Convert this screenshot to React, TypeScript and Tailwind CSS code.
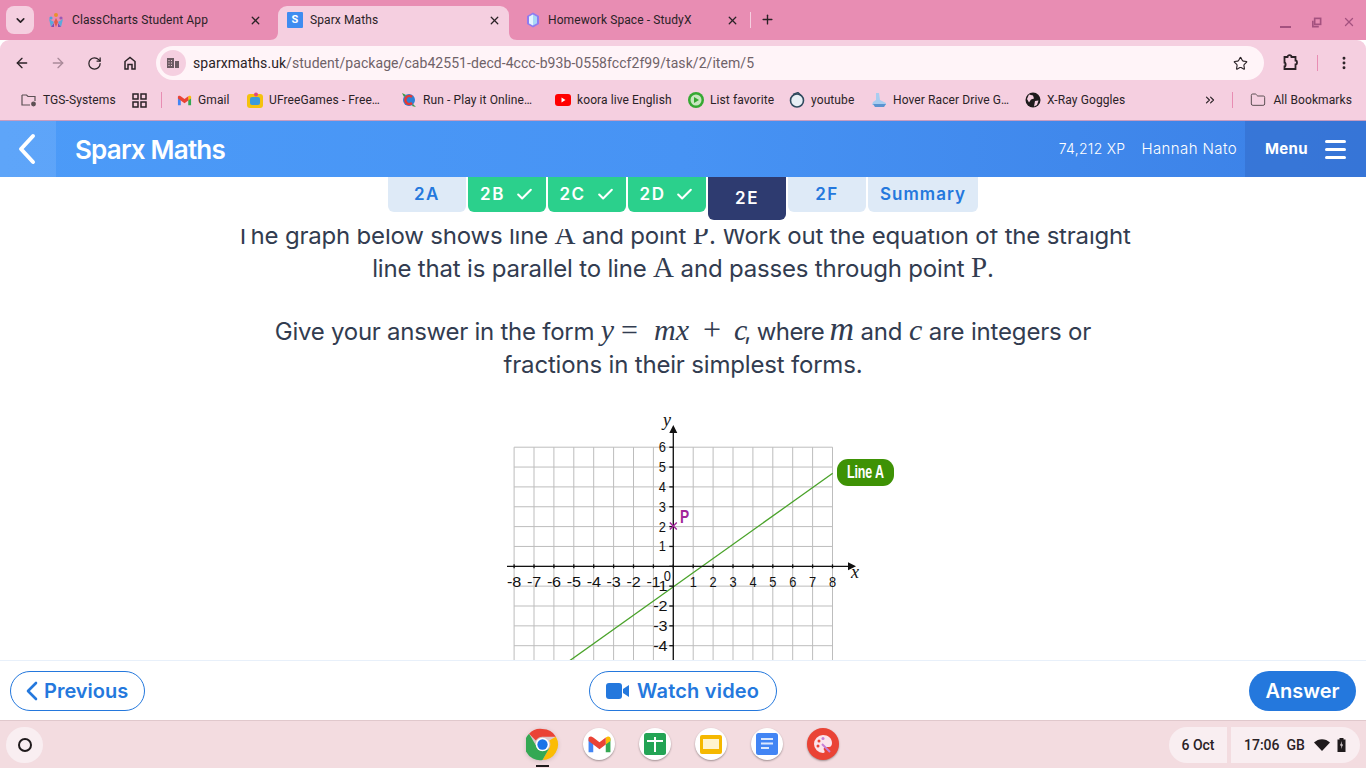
import { ArrowLeft, ArrowRight, RotateCw, Star, Plus, X, ChevronDown, ChevronsRight, Folder, EllipsisVertical, Check } from "lucide-react";

const roboto = { fontFamily: "Roboto, sans-serif" };

function ClassChartsIcon() {
  return (
    <svg width="16" height="16" viewBox="0 0 16 16">
      <circle cx="8" cy="3" r="2" fill="#e8912d" />
      <circle cx="3" cy="6" r="1.600" fill="#4aa3df" />
      <circle cx="13" cy="6" r="1.600" fill="#9b59b6" />
      <path d="M1 7l5 3-3 5zM15 7l-5 3 3 5z" fill="#5aa9dc" />
      <path d="M8 6l2 4-2 5-2-5z" fill="#e25a4a" />
      <path d="M6 11l-3 4h3zM10 11l3 4h-3z" fill="#7d4fb3" />
    </svg>
  );
}

function SparxIcon() {
  return (
    <div className="w-4 h-4 rounded-[1px] bg-[#3f8cf0] text-white text-[11px] font-bold flex items-center justify-center" style={roboto}>
      S
    </div>
  );
}

function GemIcon() {
  return (
    <svg width="16" height="16" viewBox="0 0 16 16">
      <path d="M8 .5l6 3.500v8l-6 3.500-6-3.500V4z" fill="#8f7cf0" />
      <path d="M8 2.500l4 2.300v6.400l-4 2.300-4-2.300V4.800z" fill="#a9d8f7" />
      <path d="M8 2.500v11l-4-2.300V4.800z" fill="#e3f4ff" />
    </svg>
  );
}

function GmailIcon({ size = 16 }: { size?: number }) {
  return (
    <svg width={size} height={size} viewBox="0 0 16 16">
      <path d="M1 4v9h3V7z" fill="#4285f4" />
      <path d="M15 4v9h-3V7z" fill="#34a853" />
      <path d="M12 3.500V8l3-2.200V4c0-1-1.300-1.500-2-1z" fill="#fbbc04" />
      <path d="M1 5.800L4 8l4 3 4-3V3.500L8 6.500 4 3.500 3 3c-.7-.5-2 0-2 1z" fill="#ea4335" />
    </svg>
  );
}

function Tab({ icon, title, active, gap }: { icon: React.ReactNode; title: string; active?: boolean; gap: string }) {
  return (
    <div className={`w-[231px] h-[34px] mt-[6px] pb-[6px] flex items-center pl-[9px] pr-[8px] relative ${active ? "bg-[#f5cfe0] rounded-t-[9px]" : ""}`}>
      {active && (
        <>
          <svg width="8" height="8" viewBox="0 0 8 8" className="absolute -left-2 bottom-0">
            <path d="M8 0v8H0c5 0 8-3 8-8z" fill="#f5cfe0" />
          </svg>
          <svg width="8" height="8" viewBox="0 0 8 8" className="absolute -right-2 bottom-0">
            <path d="M0 0v8h8C3 8 0 5 0 0z" fill="#f5cfe0" />
          </svg>
        </>
      )}
      <div className="w-4 flex justify-center shrink-0">{icon}</div>
      <span className={`${gap} text-xs tracking-[0.1px] text-[#2a2226] flex-1 whitespace-nowrap overflow-hidden`}>{title}</span>
      <X size={13} strokeWidth={2.4} className="text-[#2a2226]" />
    </div>
  );
}

function Bookmark({ icon, label, width }: { icon: React.ReactNode; label: string; width: string }) {
  return (
    <div className={`${width} flex items-center gap-[6px] shrink-0`}>
      <div className="w-4 h-4 flex items-center justify-center shrink-0">{icon}</div>
      <span className="text-xs tracking-[0.1px] text-[#2a2226] whitespace-nowrap">{label}</span>
    </div>
  );
}

function TopBar() {
  return (
    <div style={roboto}>
      {/* tab strip */}
      <div className="h-10 bg-[#e88db3] flex items-start pl-[6px]">
        <div className="w-7 h-7 mt-[6px] mr-[5px] rounded-lg bg-[#f5cfe0] flex items-center justify-center shrink-0">
          <ChevronDown size={13} strokeWidth={3} className="text-[#2a2226]" />
        </div>
        <div className="mr-[8px]">
          <Tab icon={<ClassChartsIcon />} title="ClassCharts Student App" gap="ml-[8px]" />
        </div>
        <div className="mr-[7px]">
          <Tab icon={<SparxIcon />} title="Sparx Maths" active gap="ml-[7px]" />
        </div>
        <Tab icon={<GemIcon />} title="Homework Space - StudyX" gap="ml-[7px]" />
        <div className="w-px h-4 bg-[#f5cfe0] mt-[12px] ml-[3px] shrink-0" />
        <Plus size={15} strokeWidth={2.2} className="mt-[12px] ml-[9px] text-[#2a2226] shrink-0" />
        <div className="flex-1" />
        <div className="flex items-center h-[34px] pr-[10px] pt-[10px] gap-[20px] text-[#a4517f]">
          <div className="w-[11px] h-[2px] bg-current mt-[10px]" />
          <svg width="11" height="11" viewBox="0 0 12 12" fill="none" stroke="currentColor" strokeWidth="1.800">
            <rect x="4" y="1.500" width="6.500" height="6.500" />
            <path d="M2 4v6.500h6.500" />
          </svg>
          <X size={14} strokeWidth={2.2} />
        </div>
      </div>
      {/* toolbar */}
      <div className="h-[46px] bg-[#f5cfe0] rounded-t-[9px] flex items-center pl-[14px] pr-[14px] relative">
        <ArrowLeft size={16} strokeWidth={2} className="text-[#2a2226]" />
        <ArrowRight size={16} strokeWidth={2} className="text-[#a98a99] ml-[20px]" />
        <RotateCw size={15} strokeWidth={2} className="text-[#2a2226] ml-[21px]" />
        <svg width="16" height="16" viewBox="0 0 16 16" fill="none" stroke="#2a2226" strokeWidth="1.500" className="ml-[20px]">
          <path d="M3 14V6.500L8 2.500l5 4V14h-3V9.500H6V14z" />
        </svg>
        <div className="ml-[18px] h-[34px] flex-1 bg-[#fff4f8] rounded-full flex items-center pl-[4px] pr-[16px]">
          <div className="w-[26px] h-[26px] rounded-full bg-[#f5cfe0] flex items-center justify-center">
            <svg width="14" height="14" viewBox="0 0 14 14" fill="#6b5a62">
              <path d="M1 2h7v10H1zM9 5h4v7H9z" />
              <path d="M2.500 4h1v1h-1zM5 4h1v1H5zM2.500 6.500h1v1h-1zM5 6.500h1v1H5zM2.500 9h1v1h-1zM5 9h1v1H5z" fill="#f5cfe0" />
            </svg>
          </div>
          <span className="ml-[7px] text-sm tracking-[0.06px] text-[#2a2226]">sparxmaths.uk</span>
          <span className="text-sm tracking-[0.06px] text-[#6f6268]">/student/package/cab42551-decd-4ccc-b93b-0558fccf2f99/task/2/item/5</span>
          <div className="flex-1" />
          <Star size={15} strokeWidth={1.8} className="text-[#2a2226]" />
        </div>
        <svg width="18" height="18" viewBox="0 0 18 18" fill="none" stroke="#2a2226" strokeWidth="1.800" className="ml-[17px]">
          <path d="M3.500 3h3c0-2.500 4-2.500 4 0h4v3.500c2 0 2 4 0 4V15h-11v-2.500c1.500 0 1.500-4 0-4z" />
        </svg>
        <div className="w-px h-4 bg-[#e88db3] ml-[18px]" />
        <EllipsisVertical size={16} strokeWidth={2.4} className="text-[#2a2226] ml-[18px]" />
      </div>
      {/* bookmarks */}
      <div className="h-[34px] pb-[6px] bg-[#f5cfe0] flex items-center pl-[21px] pr-[14px]">
        <Bookmark
          width="w-[111px]"
          label="TGS-Systems"
          icon={
            <svg width="16" height="14" viewBox="0 0 16 14" fill="none" stroke="#5c5054" strokeWidth="1.200">
              <path d="M1 2h4.500l1.500 1.500h7V8M9 12H1V2" />
              <circle cx="12.500" cy="11" r="1.800" fill="#5c5054" />
            </svg>
          }
        />
        <svg width="15" height="15" viewBox="0 0 15 15" fill="none" stroke="#2a2226" strokeWidth="1.500">
          <rect x="1" y="1" width="5" height="5" />
          <rect x="9" y="1" width="5" height="5" />
          <rect x="1" y="9" width="5" height="5" />
          <rect x="9" y="9" width="5" height="5" />
        </svg>
        <div className="w-px h-4 bg-[#e88db3] ml-[14px] mr-[14px]" />
        <Bookmark width="w-[71px]" label="Gmail" icon={<GmailIcon size={15} />} />
        <Bookmark
          width="w-[154px]"
          label="UFreeGames - Free…"
          icon={
            <svg width="16" height="16" viewBox="0 0 16 16">
              <rect x="0" y="2" width="16" height="14" rx="3" fill="#f4c20d" />
              <rect x="3" y="5" width="10" height="8" rx="2" fill="#3a9bdc" />
              <circle cx="9" cy="2.500" r="2" fill="#e2487f" />
            </svg>
          }
        />
        <Bookmark
          width="w-[154px]"
          label="Run - Play it Online…"
          icon={
            <svg width="16" height="16" viewBox="0 0 16 16">
              <circle cx="8" cy="8" r="6" fill="#2f7fd6" />
              <path d="M1 1l4 2-2 2zM12 12l3 3-4-1z" fill="#3c9a46" />
              <path d="M11 5a4 4 0 1 0 0 6" fill="none" stroke="#e53935" strokeWidth="2.500" />
            </svg>
          }
        />
        <Bookmark
          width="w-[133px]"
          label="koora live English"
          icon={
            <svg width="16" height="12" viewBox="0 0 16 12">
              <rect width="16" height="12" rx="3" fill="#ff0000" />
              <path d="M6.500 3.500v5l4-2.500z" fill="#fff" />
            </svg>
          }
        />
        <Bookmark
          width="w-[101px]"
          label="List favorite"
          icon={
            <svg width="16" height="16" viewBox="0 0 16 16">
              <circle cx="8" cy="8" r="8" fill="#35a832" />
              <circle cx="8" cy="8" r="5.500" fill="#c8e6c0" />
              <path d="M6 5v6l5-3z" fill="#35a832" />
            </svg>
          }
        />
        <Bookmark
          width="w-[82px]"
          label="youtube"
          icon={
            <svg width="16" height="16" viewBox="0 0 16 16">
              <circle cx="8" cy="8.500" r="6.500" fill="#e8eff5" stroke="#2f4a5e" strokeWidth="1.600" />
              <path d="M4 2.500l5-2 3 3" fill="none" stroke="#2f4a5e" strokeWidth="1.400" />
            </svg>
          }
        />
        <Bookmark
          width="w-[154px]"
          label="Hover Racer Drive G…"
          icon={
            <svg width="16" height="16" viewBox="0 0 16 16">
              <path d="M5 1h3l1 7 6 3v2H1l1-3 3-2z" fill="#a9cdf0" />
              <path d="M2 12h13l-2 3H4z" fill="#5b93d0" />
            </svg>
          }
        />
        <Bookmark
          width="w-[100px]"
          label="X-Ray Goggles"
          icon={
            <svg width="16" height="16" viewBox="0 0 16 16">
              <circle cx="8" cy="8" r="7.500" fill="#1e1b1c" />
              <path d="M4 2.500l4 1 1 3-3 1-2 3L2 7zM10 9l3.500-.5L12 13l-3 1.500z" fill="#f5cfe0" />
            </svg>
          }
        />
        <div className="flex-1" />
        <ChevronsRight size={14} strokeWidth={2} className="text-[#2a2226]" />
        <div className="w-px h-4 bg-[#e88db3] ml-[15px] mr-[17px]" />
        <Folder size={16} strokeWidth={1.500} className="text-[#5c5054]" />
        <span className="text-xs tracking-[0.1px] text-[#2a2226] ml-[7px] whitespace-nowrap">All Bookmarks</span>
      </div>
    </div>
  );
}

function Header() {
  return (
    <div className="h-[57px] flex items-stretch bg-gradient-to-r from-[#4c9bf8] via-[#4793f4] to-[#3b80e6] text-white border-t border-[#c79cc0]" style={{ fontFamily: "Inter, sans-serif" }}>
      <div className="w-14 bg-white/10 flex items-center justify-center">
        <svg width="18" height="32" viewBox="0 0 18 32" fill="none" stroke="#fff" strokeWidth="4" strokeLinecap="round" strokeLinejoin="round" className="-ml-[3px]">
          <path d="M15 3L3 16l12 13" />
        </svg>
      </div>
      <span className="ml-[19px] self-center text-[26px] font-semibold tracking-[-0.8px]">Sparx Maths</span>
      <div className="flex-1" />
      <span className="self-center text-sm tracking-[0.3px] font-light">74,212 XP</span>
      <span className="self-center text-[15px] tracking-[0.4px] font-light ml-4 mr-2">Hannah Nato</span>
      <div className="w-[121px] bg-[#3470d0]/70 flex items-center pl-5 gap-[17px]">
        <span className="text-[15px] tracking-[0.3px] font-bold">Menu</span>
        <div className="flex flex-col gap-[5px]">
          <div className="w-[21px] h-[3px] rounded-full bg-white" />
          <div className="w-[21px] h-[3px] rounded-full bg-white" />
          <div className="w-[21px] h-[3px] rounded-full bg-white" />
        </div>
      </div>
    </div>
  );
}

function TaskTab({ label, kind }: { label: string; kind: "todo" | "done" | "current" }) {
  const cls =
    kind === "done"
      ? "bg-[#2bd08c] text-white h-[35px]"
      : kind === "current"
        ? "bg-[#2e3b70] text-white h-[43px]"
        : "bg-[#deeaf7] text-[#2478dd] h-[35px]";
  const summary = label === "Summary";
  return (
    <div className={`${summary ? "w-[110px] tracking-[1px]" : "w-[78px] tracking-[1.5px]"} ${cls} rounded-b-md flex items-center justify-center gap-[10px] text-[17px] font-semibold`}>
      <span>{label}</span>
      {kind === "done" && <Check size={19} strokeWidth={2.6} />}
    </div>
  );
}

function Graph() {
  const ox = 159.3;
  const oy = 156.3;
  const ux = 19.9;
  const uy = 19.85;
  const xs = Array.from({ length: 17 }, (_, i) => i - 8);
  const ys = Array.from({ length: 12 }, (_, i) => 6 - i);
  const labelFont = { fontFamily: "'Liberation Sans', sans-serif" };
  return (
    <svg width="420" height="260" viewBox="0 0 420 260" className="block ml-[514px] overflow-visible">
      <g stroke="#bdbdbd" strokeWidth="1">
        {xs.map((v) => (
          <line key={v} x1={ox + v * ux} x2={ox + v * ux} y1={oy - 6 * uy} y2={260} />
        ))}
        {ys.map((v) => (
          <line key={v} x1={ox - 8 * ux} x2={ox + 8 * ux} y1={oy - v * uy} y2={oy - v * uy} />
        ))}
      </g>
      <line x1={318.7} y1={63.3} x2={44} y2={259} stroke="#4aa32a" strokeWidth="1.300" />
      <g stroke="#111" strokeWidth="1.300">
        <line x1={-7} x2={335} y1={oy} y2={oy} />
        <line x1={ox} x2={ox} y1={22} y2={260} />
        {xs.map((v) => (
          <line key={v} x1={ox + v * ux} x2={ox + v * ux} y1={oy - 2} y2={oy + 2} />
        ))}
        {ys.map((v) => (
          <line key={v} x1={ox - 4} x2={ox} y1={oy - v * uy} y2={oy - v * uy} />
        ))}
      </g>
      <path d="M159.300 15l-4 8h8zM342 156.300l-8-4v8z" fill="#111" />
      <g fontSize="15" fill="#111" textAnchor="middle" style={labelFont}>
        {xs
          .filter((v) => v !== 0)
          .map((v) => (
            <text key={v} x={ox + v * ux} y={oy + 21} textLength={v < 0 ? 14 : 7} lengthAdjust="spacingAndGlyphs">
              {v}
            </text>
          ))}
        <text x={ox - 6} y={oy + 15} textLength={7} lengthAdjust="spacingAndGlyphs">0</text>
        {ys
          .filter((v) => v !== 0)
          .map((v) => (
            <text key={v} x={v < 0 ? ox - 13 : ox - 11} y={oy - v * uy + 5} textLength={v < 0 ? 14 : 7} lengthAdjust="spacingAndGlyphs">
              {v}
            </text>
          ))}
      </g>
      <text x={149} y={16} fontSize="18" fontStyle="italic" fontFamily="'Liberation Serif', serif" fill="#111">y</text>
      <text x={337} y={168} fontSize="18" fontStyle="italic" fontFamily="'Liberation Serif', serif" fill="#111">x</text>
      <path d="M155.800 112.500l7 7M162.800 112.500l-7 7" stroke="#a2269a" strokeWidth="1.400" />
      <text x={166} y={113} fontSize="18" fontWeight="700" fill="#a2269a" style={labelFont} textLength="9" lengthAdjust="spacingAndGlyphs">P</text>
      <rect x={323} y={49} width={57} height={27} rx={11} fill="#3e9205" />
      <text x={351.500} y={68} fontSize="18" fontWeight="700" fill="#fff" textAnchor="middle" style={labelFont} textLength="37" lengthAdjust="spacingAndGlyphs">Line A</text>
    </svg>
  );
}

function MathVar({ children, className = "" }: { children: React.ReactNode; className?: string }) {
  return <span className={`italic leading-[0] tracking-normal ${className.includes("text-[") ? className : `text-[30px] ${className}`}`} style={{ fontFamily: "'Liberation Serif', serif" }}>{children}</span>;
}

function MathRm({ children, className = "" }: { children: React.ReactNode; className?: string }) {
  return <span className={`leading-[0] tracking-normal ${className || "text-[29px]"}`} style={{ fontFamily: "'Liberation Serif', serif" }}>{children}</span>;
}

function Question() {
  return (
    <div className="flex-1 overflow-hidden bg-white">
      <div className="-mt-[10px] text-center text-[#323c50] text-2xl tracking-[-0.18px] leading-[33px]" style={{ fontFamily: "Inter, sans-serif" }}>
        <p>
          <span className="tracking-[-0.2px]">
            The graph below shows line <MathRm>A</MathRm> and point <MathRm>P</MathRm>. Work out the equation of the straight
          </span>
          <br />
          line that is parallel to line <MathRm>A</MathRm> and passes through point <MathRm>P</MathRm>.
        </p>
        <p className="mt-[30px]">
          <span className="tracking-[-0.26px]">Give your answer in the form </span>
          <MathVar>y</MathVar>
          <MathRm className="ml-[7px] text-[30px]">=</MathRm>
          <MathVar className="ml-[16px] tracking-[2px]">mx</MathVar>
          <MathRm className="ml-[14px] text-[32px]">+</MathRm>
          <MathVar className="ml-[13px]">c</MathVar>
          <span className="tracking-[-0.6px] -ml-[3px]">, where </span>
          <MathVar className="text-[34px] -ml-[1px]">m</MathVar> and <MathVar>c</MathVar> are integers or
          <br />
          fractions in their simplest forms.
        </p>
        <div className="mt-[29px]">
          <Graph />
        </div>
      </div>
    </div>
  );
}

function Footer() {
  return (
    <div className="h-[60px] bg-white border-t border-[#e8f0fa] grid grid-cols-[1fr_auto_1fr] items-center px-[10px] text-[#2478dd] font-semibold text-[20px]" style={{ fontFamily: "Inter, sans-serif" }}>
      <div className="w-[135px] h-10 rounded-full border border-[#2478dd] flex items-center pl-[14px] gap-[5px]">
        <svg width="14" height="20" viewBox="0 0 14 20" fill="none" stroke="#2478dd" strokeWidth="2.600" strokeLinecap="round" strokeLinejoin="round">
          <path d="M11 2L3 10l8 8" />
        </svg>
        <span>Previous</span>
      </div>
      <div className="w-[188px] h-10 rounded-full border border-[#2478dd] flex items-center pl-[16px] gap-[8px]">
        <svg width="23" height="16" viewBox="0 0 23 16" fill="#2478dd">
          <rect width="16" height="16" rx="3" />
          <path d="M17 6l6-4v12l-6-4z" />
        </svg>
        <span className="tracking-[0.2px]">Watch video</span>
      </div>
      <div className="w-[107px] h-10 rounded-full bg-[#2478dd] text-white flex items-center justify-center justify-self-end">Answer</div>
    </div>
  );
}

function ShelfIcon({ children }: { children: React.ReactNode }) {
  return <div className="w-8 h-8 rounded-full bg-white shadow-[0_1px_2px_rgba(0,0,0,0.35)] flex items-center justify-center overflow-hidden">{children}</div>;
}

function Shelf() {
  return (
    <div className="h-[48px] bg-[#f3dce0] border-t border-[#e0c8cc] flex items-center relative" style={roboto}>
      <div className="w-[37px] h-9 ml-[6px] rounded-full bg-[#f9eef1] flex items-center justify-center">
        <div className="w-[14px] h-[14px] rounded-full border-2 border-[#1f1a1c]" />
      </div>
      <div className="absolute left-[526px] top-[7px] flex gap-[24px]">
        <div className="relative">
          <svg width="33" height="33" viewBox="0 0 32 32" className="drop-shadow-sm">
            <path d="M16 1a15 15 0 0 1 13 7.500H16a7.500 7.500 0 0 0-6.500 3.700L3 5.500A15 15 0 0 1 16 1z" fill="#ea4335" />
            <path d="M29 8.500A15 15 0 0 1 16 31l6.500-11.300A7.500 7.500 0 0 0 22.500 12z" fill="#fbbc04" />
            <path d="M16 31A15 15 0 0 1 3 5.500l6.500 11.200a7.500 7.500 0 0 0 13 3z" fill="#34a853" />
            <circle cx="16" cy="16" r="6.500" fill="#fff" />
            <circle cx="16" cy="16" r="5" fill="#1a73e8" />
          </svg>
          <div className="absolute left-[10px] top-[37px] w-[13px] h-[2px] bg-[#1f1a1c]" />
        </div>
        <ShelfIcon>
          <GmailIcon size={25} />
        </ShelfIcon>
        <ShelfIcon>
          <svg width="22" height="22" viewBox="0 0 22 22">
            <rect width="22" height="22" rx="2.500" fill="#23a455" />
            <path d="M3 8h16M11 4v15" stroke="#fff" strokeWidth="2" />
          </svg>
        </ShelfIcon>
        <ShelfIcon>
          <svg width="22" height="19" viewBox="0 0 22 19">
            <rect width="22" height="19" rx="2" fill="#f5b800" />
            <rect x="3" y="4" width="16" height="10" fill="#fff4cf" />
          </svg>
        </ShelfIcon>
        <ShelfIcon>
          <svg width="22" height="22" viewBox="0 0 22 22">
            <rect width="22" height="22" rx="2.500" fill="#4285f4" />
            <path d="M5 5h12v2H5zM5 9.500h12v2H5zM5 14h8v2H5z" fill="#dbe8fd" />
          </svg>
        </ShelfIcon>
        <div className="w-8 h-8 rounded-full bg-[#ea4335] shadow-[0_1px_2px_rgba(0,0,0,0.35)] flex items-center justify-center">
          <svg width="22" height="22" viewBox="0 0 22 22">
            <path d="M11 2a9 9 0 1 0 0 18c2 0 2-2 1-3s0-3 2-3h3c2 0 3-2 3-4 0-5-4-8-9-8z" fill="#fbe4ec" />
            <circle cx="7" cy="8" r="1.500" fill="#ea4335" />
            <circle cx="11" cy="5.500" r="1.500" fill="#c77dd6" />
            <circle cx="6" cy="13" r="1.500" fill="#ea4335" />
            <path d="M10 11l8 8" stroke="#c77dd6" strokeWidth="2" />
          </svg>
        </div>
      </div>
      <div className="flex-1" />
      <div className="w-[58px] h-9 rounded-l-full rounded-r-[3px] bg-[#f9eef1] flex items-center justify-center text-sm font-medium text-[#2a2226]">6 Oct</div>
      <div className="w-[129px] h-9 ml-1 mr-[6px] rounded-l-[3px] rounded-r-full bg-[#f9eef1] flex items-center pl-[13px] gap-[7px] text-sm font-medium text-[#2a2226]">
        <span>17:06</span>
        <span>GB</span>
        <svg width="16" height="12" viewBox="0 0 16 12" className="ml-[2px]">
          <path d="M0 3.500C4.500-1 11.500-1 16 3.500L8 12z" fill="#1f1a1c" />
        </svg>
        <svg width="9" height="14" viewBox="0 0 9 14">
          <path d="M2.500 0h4v1.500H8.500V14H.5V1.500h2z" fill="#1f1a1c" />
          <path d="M5 3L3 7.500h1.500L4 11l2-4.500H4.500z" fill="#f9eef1" />
        </svg>
      </div>
    </div>
  );
}

export default function App() {
  return (
    <div className="h-screen w-full flex flex-col overflow-hidden bg-white">
      <TopBar />
      <Header />
      <div className="flex-1 flex flex-col min-h-0">
        <div className="h-[52px] bg-white flex justify-center items-start gap-[2px] relative z-10 shrink-0" style={{ fontFamily: "Inter, sans-serif" }}>
          <TaskTab label="2A" kind="todo" />
          <TaskTab label="2B" kind="done" />
          <TaskTab label="2C" kind="done" />
          <TaskTab label="2D" kind="done" />
          <TaskTab label="2E" kind="current" />
          <TaskTab label="2F" kind="todo" />
          <TaskTab label="Summary" kind="todo" />
        </div>
        <Question />
      </div>
      <Footer />
      <Shelf />
    </div>
  );
}
